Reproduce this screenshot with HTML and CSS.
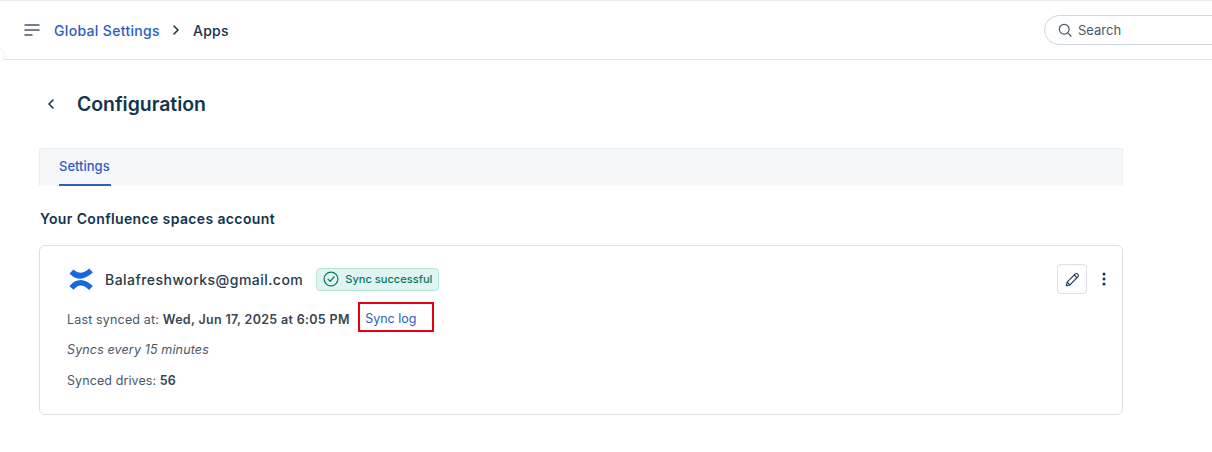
FILE: index.html
```html
<!DOCTYPE html>
<html lang="en">
<head>
<meta charset="utf-8">
<title>Configuration</title>
<link rel="stylesheet" href="styles.css">
</head>
<body>
<header class="topbar">
  <span class="rail-handle"></span>
  <div class="crumbs">
    <svg class="menu-icon" width="16" height="12" viewBox="0 0 16 12" fill="none" stroke="#475867" stroke-width="1.4" stroke-linecap="round"><path d="M1 1h14M1 6h14M1 11h7"/></svg>
    <a class="crumb-link">Global Settings</a>
    <svg class="crumb-sep" width="8" height="12" viewBox="0 0 8 12" fill="none" stroke="#12344d" stroke-width="1.6" stroke-linecap="round" stroke-linejoin="round"><path d="M2 2l4 4-4 4"/></svg>
    <span class="crumb-current">Apps</span>
  </div>
  <div class="search">
    <svg width="14" height="14" viewBox="0 0 14 14" fill="none" stroke="#475867" stroke-width="1.2" stroke-linecap="round"><circle cx="6.2" cy="6.2" r="4.9"/><path d="M9.8 9.8L13 13"/></svg>
    <span>Search</span>
  </div>
</header>
<main class="page">
  <div class="title-row">
    <svg class="back" width="8" height="12" viewBox="0 0 8 12" fill="none" stroke="#12344d" stroke-width="1.6" stroke-linecap="round" stroke-linejoin="round"><path d="M6 2L2 6l4 4"/></svg>
    <h1>Configuration</h1>
  </div>
  <nav class="tabs"><span class="tab">Settings</span></nav>
  <h2>Your Confluence spaces account</h2>
  <section class="card">
    <div class="card-actions">
      <button class="edit" aria-label="Edit">
        <svg width="15" height="15" viewBox="0 0 14 14" fill="none" stroke="#12344d" stroke-width="1" stroke-linejoin="round"><path d="M1.2 12.8l.8-3.400L9.600 1.800a1.300 1.300 0 0 1 1.800 0l.8.8a1.300 1.300 0 0 1 0 1.800L4.600 12z"/><path d="M2 9.400L4.600 12M8.600 2.800l2.600 2.600"/></svg>
      </button>
      <svg class="more" width="4" height="14" viewBox="0 0 4 14" fill="#12344d"><circle cx="2" cy="2" r="1.500"/><circle cx="2" cy="7" r="1.500"/><circle cx="2" cy="12" r="1.500"/></svg>
    </div>
    <div class="account">
      <svg class="logo" width="24" height="24" viewBox="0 0 24 24" fill="none" stroke="#1868db" stroke-width="5.500"><path d="M2.500 4.500Q11 13.500 22 3.500"/><path d="M2.500 21Q11 10.500 22 21"/></svg>
      <span class="email">Balafreshworks@gmail.com</span>
      <span class="badge">
        <svg width="16" height="16" viewBox="0 0 16 16" fill="none" stroke="#00795b" stroke-width="1.200" stroke-linecap="round" stroke-linejoin="round"><circle cx="8" cy="8" r="6.900"/><path d="M5 8.200l2.100 2.100L11 6"/></svg>
        Sync successful
      </span>
    </div>
    <div class="line sync-line">
      <span class="sync-text">Last synced at: <b>Wed, Jun 17, 2025 at 6:05 PM</b></span>
      <a class="sync-log">Sync log</a>
    </div>
    <p class="line every">Syncs every 15 minutes</p>
    <p class="line drives">Synced drives: <b>56</b></p>
  </section>
</main>
</body>
</html>
```

FILE: styles.css
```css
* { box-sizing: border-box; }
html, body { margin: 0; height: 100%; }
body {
  background: #fff;
  font-family: Inter, "Liberation Sans", sans-serif;
  color: #475867;
  overflow: hidden;
}
.topbar {
  position: relative;
  height: 60px;
  border-top: 1px solid #ebeff3;
  border-bottom: 1px solid #dfe3e9;
  display: flex;
  align-items: center;
  justify-content: space-between;
  padding-left: 24px;
}
.rail-handle {
  position: absolute;
  left: -12px;
  top: 46px;
  width: 17px;
  height: 17px;
  background: #fff;
  border: 1px solid #f1f3f6;
  border-radius: 50%;
}
.crumbs { display: flex; align-items: center; }
.menu-icon { margin-right: 14px; }
.crumb-link { color: #2c5cc5; font-size: 14px; font-weight: 500; letter-spacing: .33px; margin-right: 12px; }
.crumb-sep { margin-right: 13px; }
.crumb-current { color: #12344d; font-size: 14px; font-weight: 500; letter-spacing: .25px; }
.search {
  width: 180px;
  height: 30px;
  margin-right: -12px;
  border: 1px solid #cfd7df;
  border-radius: 15px 0 0 15px;
  display: flex;
  align-items: center;
  gap: 6px;
  padding-left: 13px;
  font-size: 13px;
  color: #475867;
}
.page { padding: 0 89px 0 39px; }
.title-row { display: flex; align-items: center; height: 28px; margin-top: 30px; }
.back { margin-left: 8px; margin-right: 22px; }
h1 { margin: 0; font-size: 19.400px; font-weight: 600; color: #12344d; line-height: 28px; }
.tabs {
  margin-top: 30px;
  height: 38px;
  background: #f5f7f9;
  border: 1px solid #ebeff3;
  border-width: 1px 1px 0;
  padding-left: 19px;
  display: flex;
}
.tab {
  color: #2c5cc5;
  font-size: 13px;
  font-weight: 500;
  line-height: 34px;
  height: 37px;
  border-bottom: 2px solid #2c5cc5;
  padding-right: 1px;
}
h2 { margin: 23px 0 0 1px; font-size: 14px; font-weight: 600; letter-spacing: .37px; line-height: 20px; color: #12344d; }
.card {
  position: relative;
  margin-top: 16px;
  height: 170px;
  border: 1px solid #dadfe8;
  border-radius: 6px;
  padding: 21px 27px 0;
}
.card-actions {
  position: absolute;
  top: 18px;
  right: 16px;
  display: flex;
  align-items: center;
  gap: 15px;
}
.edit {
  width: 30px;
  height: 30px;
  padding: 0;
  background: #fff;
  border: 1px solid #dadfe8;
  border-radius: 4px;
  display: flex;
  align-items: center;
  justify-content: center;
}
.account { display: flex; align-items: center; height: 24px; }
.logo { margin-left: 2px; margin-right: 12px; }
.email { font-size: 14px; font-weight: 500; letter-spacing: .46px; color: #283a4b; }
.badge {
  margin-left: 13px;
  height: 23px;
  padding: 0 6px;
  display: flex;
  align-items: center;
  gap: 6px;
  font-size: 11px;
  font-weight: 500;
  letter-spacing: .05px;
  color: #00795b;
  background: #e0f5f1;
  border: 1px solid #b4e5da;
  border-radius: 4px;
}
.line { margin: 0; font-size: 12.500px; line-height: 18px; color: #475867; }
.line b { font-weight: 600; color: #384551; }
.sync-line { display: flex; align-items: center; margin-top: 11px; height: 30px; }
.sync-text { letter-spacing: .16px; margin-top: 6px; }
.sync-text b { letter-spacing: .32px; }
.sync-log {
  margin-left: 8px;
  width: 76px;
  height: 30px;
  border: 2.500px solid #e60012;
  color: #2c5cc5;
  line-height: 30px;
  padding-left: 5.500px;
  letter-spacing: -.03px;
}
.every { font-style: italic; margin-top: 9px; letter-spacing: .14px; }
.drives { margin-top: 13px; letter-spacing: .09px; }
```
